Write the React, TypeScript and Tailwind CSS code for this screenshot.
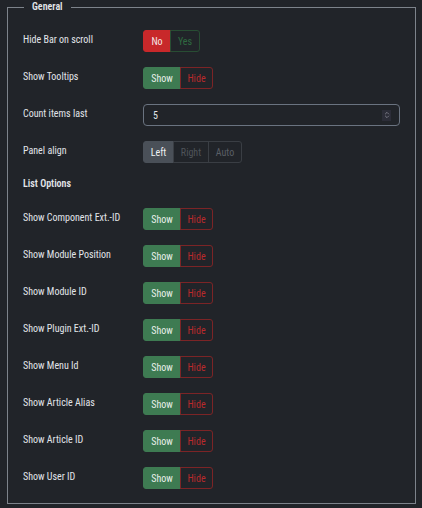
import { ChevronsUpDown } from "lucide-react"

type Opt = { label: string; w: string; cls: string }

const Group = ({ opts }: { opts: Opt[] }) => (
  <div className="flex h-[22px]">
    {opts.map((o, i) => (
      <div
        key={o.label}
        className={`${o.w} ${o.cls} flex items-center justify-center border text-[10px] ${
          i === 0 ? "rounded-l-[3px]" : ""
        } ${i === opts.length - 1 ? "rounded-r-[3px]" : ""} ${i > 0 ? "-ml-px" : ""}`}
      >
        {o.label}
      </div>
    ))}
  </div>
)

const showHide: Opt[] = [
  { label: "Show", w: "w-[38px]", cls: "bg-[#3e7b52] border-[#3e7b52] text-[#e8efe9]" },
  { label: "Hide", w: "w-[33px]", cls: "border-[#7c2426] text-[#b92a2c] relative" },
]

const Row = ({ label, children }: { label: string; children: React.ReactNode }) => (
  <div className="flex items-start">
    <div className="w-[120px] shrink-0 pt-[3px] leading-[14px] text-[10px] text-[#e2e5e9]">
      {label}
    </div>
    {children}
  </div>
)

const listRows = [
  "Show Component Ext.-ID",
  "Show Module Position",
  "Show Module ID",
  "Show Plugin Ext.-ID",
  "Show Menu Id",
  "Show Article Alias",
  "Show Article ID",
  "Show User ID",
]

export default function App() {
  return (
    <div className="h-[508px] w-[422px] bg-[#212429] font-['Roboto',sans-serif] font-stretch-condensed">
      <fieldset className="ml-[7px] mr-[6px] border border-[#7d838b] pl-[15px] pr-[15px] pt-[16px] pb-[14px]">
        <legend className="ml-px px-[8px] text-[10px] font-semibold leading-[14px] text-[#e3e6ea]">
          General
        </legend>
        <div className="flex flex-col gap-[15px]">
          <Row label="Hide Bar on scroll">
            <Group
              opts={[
                { label: "No", w: "w-[28px]", cls: "bg-[#c8282a] border-[#c8282a] text-[#f3e3e3]" },
                { label: "Yes", w: "w-[30px]", cls: "border-[#284d33] text-[#2f6a40]" },
              ]}
            />
          </Row>
          <Row label="Show Tooltips">
            <Group opts={showHide} />
          </Row>
          <Row label="Count items last">
            <div className="flex h-[22px] w-[257px] items-center justify-between rounded-[4px] border border-[#6a7380] pl-[9px] pr-[8px] text-[10px] text-[#e3e6ea]">
              <span>5</span>
              <span className="flex h-[11px] w-[9px] items-center justify-center bg-[#2c2d38] text-[#9a9aa6]">
                <ChevronsUpDown size={8} strokeWidth={2} />
              </span>
            </div>
          </Row>
          <Row label="Panel align">
            <Group
              opts={[
                { label: "Left", w: "w-[31px]", cls: "bg-[#4a5058] border-[#4a5058] text-[#eef0f2]" },
                { label: "Right", w: "w-[36px]", cls: "border-[#3a3e44] text-[#4f545a]" },
                { label: "Auto", w: "w-[34px]", cls: "border-[#3a3e44] text-[#5a5f66]" },
              ]}
            />
          </Row>
          <div className="-mt-[1px] pb-[2px] text-[10px] font-semibold leading-[14px] text-[#e3e6ea]">List Options</div>
          {listRows.map((l) => (
            <Row key={l} label={l}>
              <Group opts={showHide} />
            </Row>
          ))}
        </div>
      </fieldset>
    </div>
  )
}
